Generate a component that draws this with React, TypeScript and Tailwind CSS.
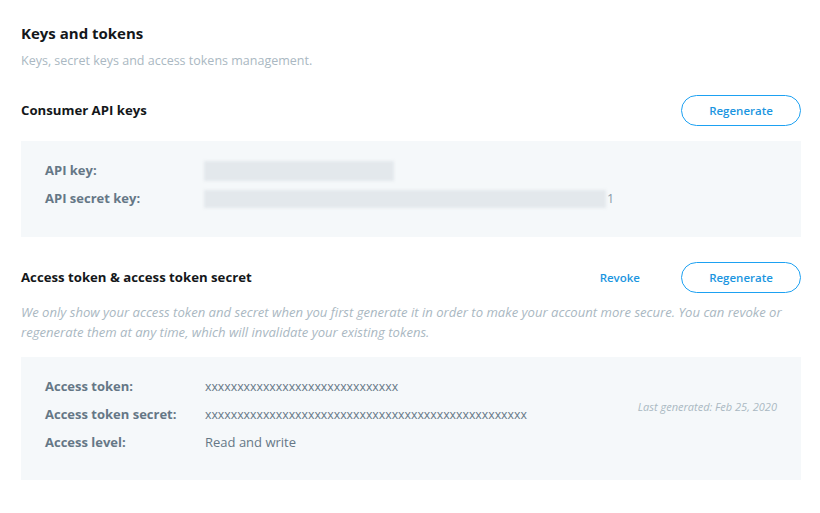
export default function App() {
  return (
    <div className="min-h-screen bg-white text-[#14171a]" style={{ fontFamily: '"Open Sans", "Noto Sans", sans-serif' }}>
      <div className="px-[21px] pt-[22px] w-[822px]">
        <h1 className="text-[15px] font-bold leading-[22px]">Keys and tokens</h1>
        <p className="text-[12.5px] text-[#aab8c2] leading-[20px] mt-[7px]">
          Keys, secret keys and access tokens management.
        </p>

        <div className="flex items-center justify-between mt-[24px] h-[31px]">
          <h2 className="text-[13.2px] font-bold">Consumer API keys</h2>
          <button className="w-[120px] h-[31px] rounded-full border border-[#1da1f2] text-[#1b95e0] text-[11.5px] font-semibold">
            Regenerate
          </button>
        </div>

        <div className="bg-[#f5f8fa] mt-[15px] h-[96px] pl-[24px] pt-[16px]">
          <div className="flex items-center h-[28px]">
            <span className="w-[159px] text-[13px] font-bold text-[#657786]">API key:</span>
            <div className="w-[190px] h-[20px] bg-[#e3e8ec] blur-[1.5px]" />
          </div>
          <div className="flex items-center h-[28px]">
            <span className="w-[159px] text-[13px] font-bold text-[#657786]">API secret key:</span>
            <div className="w-[402px] h-[18px] bg-[#e3e8ec] blur-[1.5px]" />
            <span className="text-[12.5px] text-[#8899a6] ml-[1px]">1</span>
          </div>
        </div>

        <div className="flex items-center justify-between mt-[25px] h-[31px]">
          <h2 className="text-[13.2px] font-bold">Access token &amp; access token secret</h2>
          <div className="flex items-center">
            <button className="text-[#1b95e0] text-[11.5px] font-semibold mr-[41px]">Revoke</button>
            <button className="w-[120px] h-[31px] rounded-full border border-[#1da1f2] text-[#1b95e0] text-[11.5px] font-semibold">
              Regenerate
            </button>
          </div>
        </div>
        <p className="text-[13.1px] italic text-[#aab8c2] leading-[20px] mt-[9px]">
          We only show your access token and secret when you first generate it in order to make your account more secure. You can revoke or regenerate them at any time, which will invalidate your existing tokens.
        </p>

        <div className="bg-[#f5f8fa] mt-[15px] h-[123px] pl-[24px] pr-[24px] pt-[16px] flex">
          <div className="flex-1">
            <div className="flex items-center h-[28px]">
              <span className="w-[160px] text-[13px] font-bold text-[#657786]">Access token:</span>
              <span className="text-[12.3px] text-[#657786]">xxxxxxxxxxxxxxxxxxxxxxxxxxxxxx</span>
            </div>
            <div className="flex items-center h-[28px]">
              <span className="w-[160px] text-[13px] font-bold text-[#657786]">Access token secret:</span>
              <span className="text-[12.3px] text-[#657786]">xxxxxxxxxxxxxxxxxxxxxxxxxxxxxxxxxxxxxxxxxxxxxxxxxx</span>
            </div>
            <div className="flex items-center h-[28px]">
              <span className="w-[160px] text-[13px] font-bold text-[#657786]">Access level:</span>
              <span className="text-[13px] text-[#657786]">Read and write</span>
            </div>
          </div>
          <div className="pt-[20px]">
            <span className="text-[11px] italic text-[#aab8c2]">Last generated: Feb 25, 2020</span>
          </div>
        </div>
      </div>
    </div>
  )
}
